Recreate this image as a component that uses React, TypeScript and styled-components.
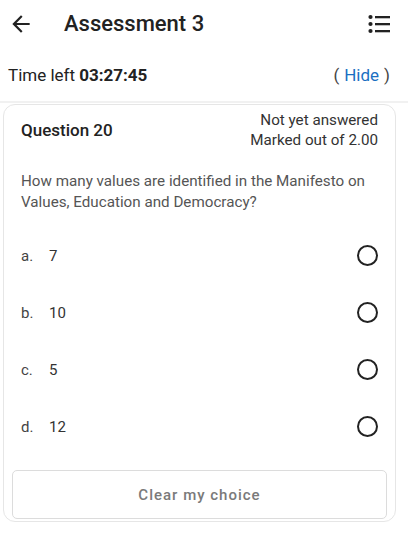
import React, { useState } from 'react'
import styled, { createGlobalStyle } from 'styled-components'

const GlobalStyle = createGlobalStyle`
    html, body {
        margin: 0;
        padding: 0;
        background: #ffffff;
        font-family: Roboto, "Noto Sans", "Liberation Sans", sans-serif;
    }
`

const Page = styled.div`
    width: 408px;
    height: 534px;
    display: flex;
    flex-direction: column;
    overflow: hidden;
    background: #ffffff;
`

const TopBar = styled.div`
    height: 47px;
    display: flex;
    align-items: center;
    padding: 0 16px 0 8px;
    box-sizing: border-box;
`

const IconButton = styled.button`
    border: none;
    background: transparent;
    padding: 0;
    width: 26px;
    height: 26px;
    display: flex;
    align-items: center;
    justify-content: center;
    color: #222;
    cursor: pointer;
`

const Title = styled.h1`
    flex: 1;
    margin: 0 0 0 30px;
    font-size: 22px;
    font-weight: 500;
    color: #222;
`

const TimerRow = styled.div`
    height: 56px;
    display: flex;
    align-items: center;
    justify-content: space-between;
    padding: 2px 18px 0 8px;
    font-size: 17px;
    color: #222;
    box-sizing: border-box;
    border-bottom: 2px solid #f1f1f1;
`

const TimeValue = styled.b`
    font-weight: 700;
`

const HideLink = styled.span`
    color: #444;
    a {
        color: #1b6fc2;
        text-decoration: none;
        margin: 0 5px;
    }
`

const Card = styled.div`
    margin: 1px 12px 0 3px;
    border: 1px solid #e6e6e6;
    border-radius: 12px;
    padding: 0 8px 2px 8px;
    display: flex;
    flex-direction: column;
`

const QuestionHead = styled.div`
    display: flex;
    justify-content: space-between;
    align-items: center;
    padding: 5px 9px 0 9px;
`

const QuestionNo = styled.div`
    font-size: 17px;
    font-weight: 500;
    color: #222;
`

const Status = styled.div`
    text-align: right;
    font-size: 15.2px;
    line-height: 20px;
    color: #333;
`

const QuestionText = styled.p`
    margin: 21px 9px 14px 9px;
    font-size: 15.2px;
    line-height: 21px;
    color: #555;
`

const OptionRow = styled.label`
    height: 57px;
    display: flex;
    align-items: center;
    padding: 0 9px;
    font-size: 15px;
    color: #333;
    cursor: pointer;
`

const OptionLetter = styled.span`
    width: 28px;
    color: #444;
`

const OptionText = styled.span`
    flex: 1;
`

const Radio = styled.span<{ checked: boolean }>`
    width: 17px;
    height: 17px;
    border: 2px solid #222;
    border-radius: 50%;
    display: flex;
    align-items: center;
    justify-content: center;
    &::after {
        content: '';
        width: 9px;
        height: 9px;
        border-radius: 50%;
        background: ${props => (props.checked ? '#222' : 'transparent')};
    }
`

const ClearButton = styled.button`
    margin: 15px 0 0 0;
    height: 49px;
    border: 1px solid #dcdcdc;
    border-radius: 5px;
    background: #ffffff;
    font-family: inherit;
    font-size: 15px;
    font-weight: 500;
    letter-spacing: 1px;
    color: #7a7a7a;
    cursor: pointer;
`

const options = [
    { letter: 'a.', text: '7' },
    { letter: 'b.', text: '10' },
    { letter: 'c.', text: '5' },
    { letter: 'd.', text: '12' },
]

const App: React.FC = () => {
    const [choice, setChoice] = useState<number | null>(null)

    return (
        <Page>
            <GlobalStyle />
            <TopBar>
                <IconButton aria-label="Back">
                    <svg width="26" height="26" viewBox="0 0 24 24">
                        <path d="M20 11H7.83l5.59-5.59L12 4l-8 8 8 8 1.41-1.41L7.83 13H20v-2z" fill="currentColor" />
                    </svg>
                </IconButton>
                <Title>Assessment 3</Title>
                <IconButton aria-label="Question list">
                    <svg width="22" height="20" viewBox="0 0 22 20">
                        <circle cx="2.5" cy="3" r="2.1" fill="currentColor" />
                        <circle cx="2.5" cy="10" r="2.1" fill="currentColor" />
                        <circle cx="2.5" cy="17" r="2.1" fill="currentColor" />
                        <rect x="7" y="2" width="15" height="2.3" fill="currentColor" />
                        <rect x="7" y="9" width="15" height="2.3" fill="currentColor" />
                        <rect x="7" y="16" width="15" height="2.3" fill="currentColor" />
                    </svg>
                </IconButton>
            </TopBar>
            <TimerRow>
                <span>
                    Time left <TimeValue>03:27:45</TimeValue>
                </span>
                <HideLink>
                    (<a href="#">Hide</a>)
                </HideLink>
            </TimerRow>
            <Card>
                <QuestionHead>
                    <QuestionNo>Question 20</QuestionNo>
                    <Status>
                        Not yet answered
                        <br />
                        Marked out of 2.00
                    </Status>
                </QuestionHead>
                <QuestionText>
                    How many values are identified in the Manifesto on Values, Education and Democracy?
                </QuestionText>
                {options.map((opt, i) => (
                    <OptionRow key={opt.letter} onClick={() => setChoice(i)}>
                        <OptionLetter>{opt.letter}</OptionLetter>
                        <OptionText>{opt.text}</OptionText>
                        <Radio checked={choice === i} />
                    </OptionRow>
                ))}
                <ClearButton onClick={() => setChoice(null)}>Clear my choice</ClearButton>
            </Card>
        </Page>
    )
}

export default App
